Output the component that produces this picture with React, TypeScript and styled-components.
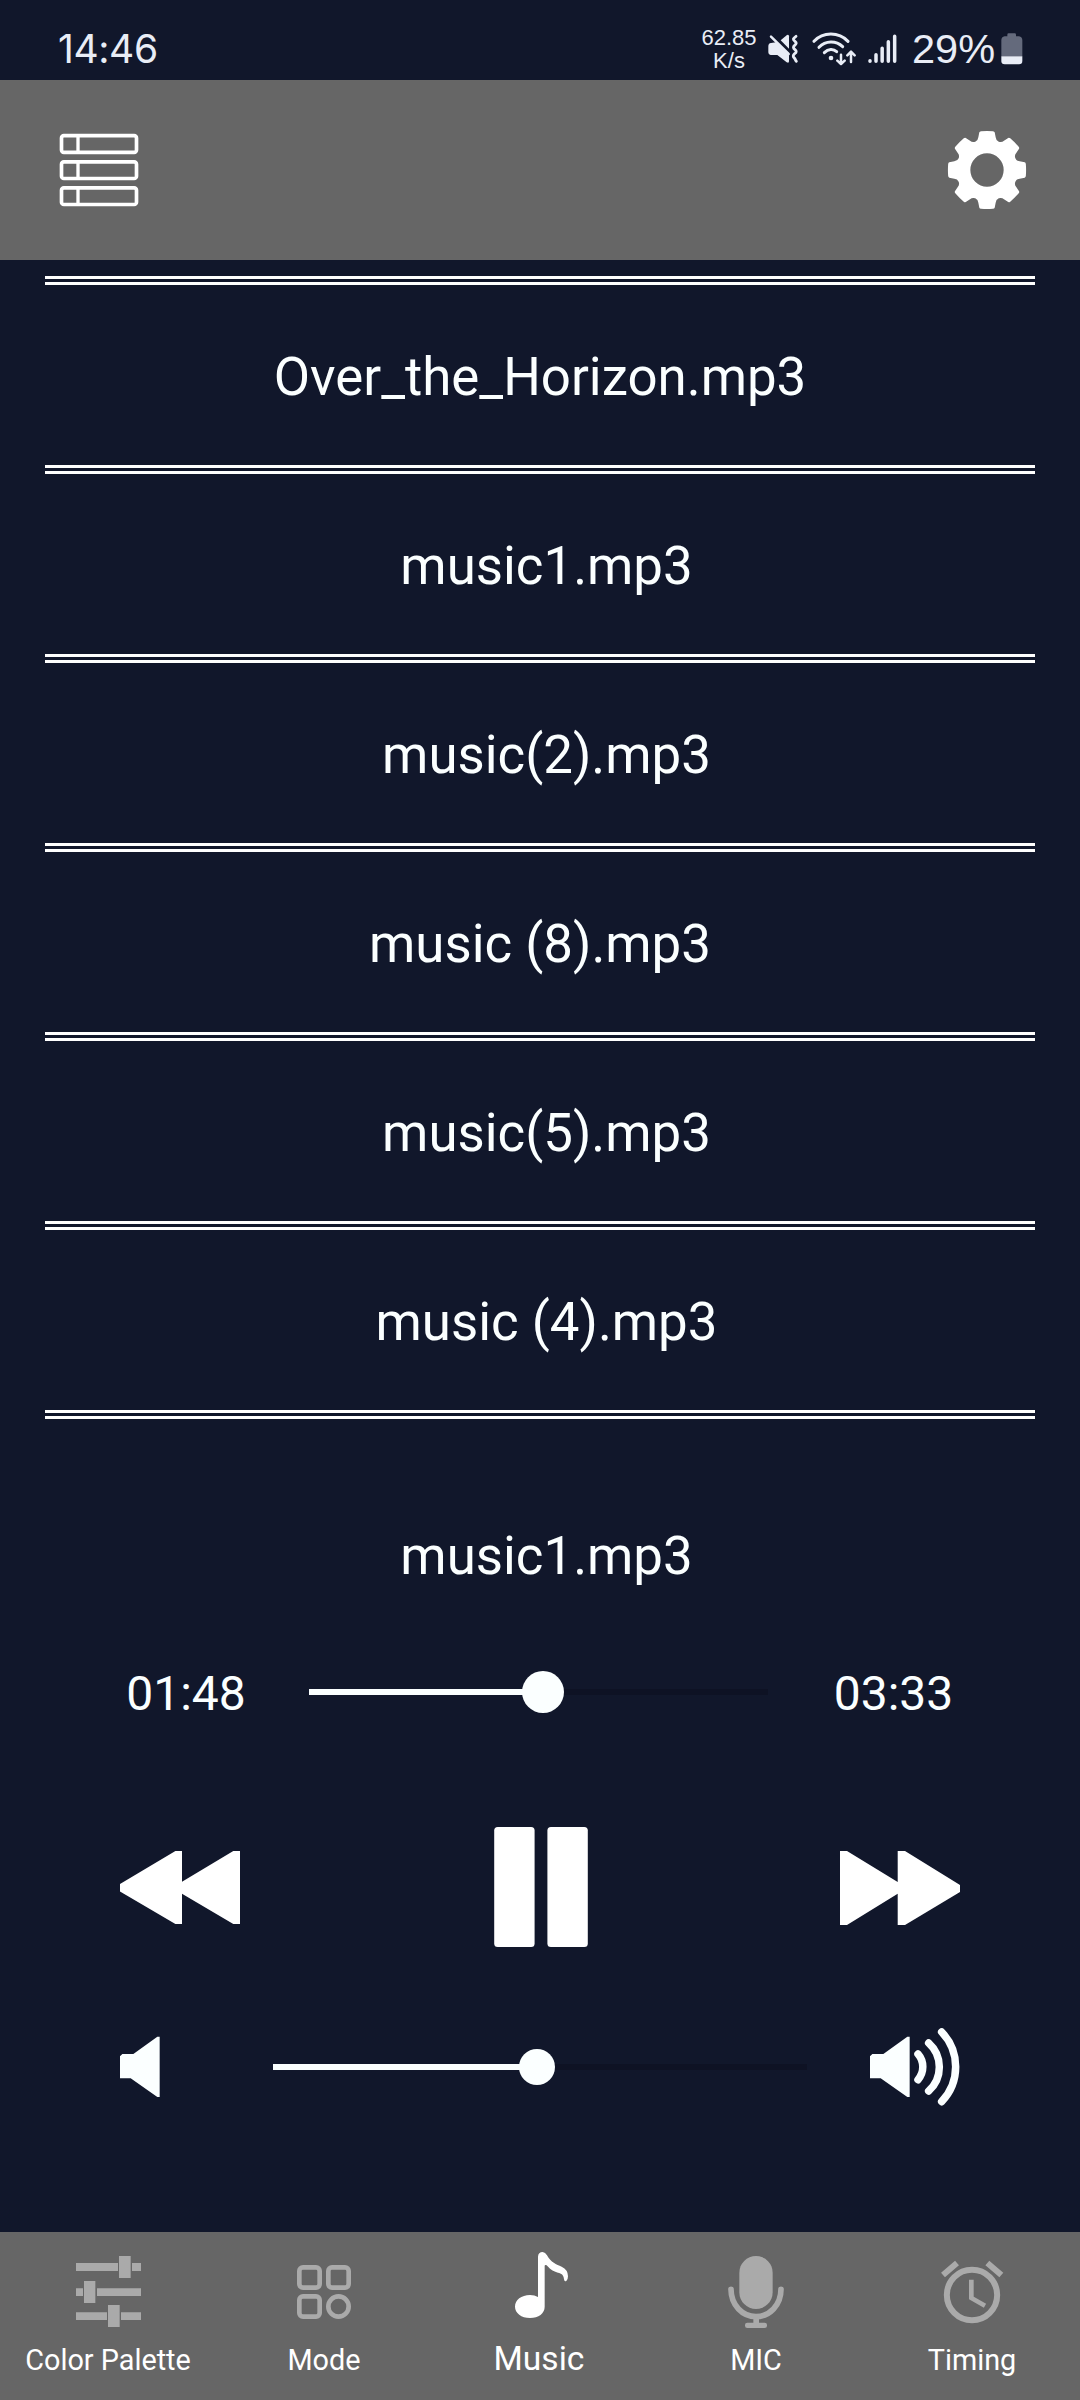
import React from "react";
import styled, { createGlobalStyle } from "styled-components";

const NIGHT = "#11172b";
const BAR = "#666666";
const MUTED = "#aaaaaa";
const STATUS = "#e9edf6";

const GlobalStyle = createGlobalStyle`
  * { box-sizing: border-box; }
  body { margin: 0; background: ${NIGHT}; }
  svg { display: block; flex: none; }
`;

const Screen = styled.div`
  width: 1080px;
  height: 2400px;
  display: flex;
  flex-direction: column;
  overflow: hidden;
  background: ${NIGHT};
  color: #fbffff;
  font-family: Roboto, sans-serif;
`;

const StatusBar = styled.div`
  height: 80px;
  flex: none;
  display: flex;
  align-items: center;
  padding: 18px 57px 0 58px;
  color: ${STATUS};
  font-family: "Liberation Sans", sans-serif;
`;

const Clock = styled.span`
  font-family: Inter, sans-serif;
  font-size: 39px;
  line-height: 60px;
  letter-spacing: -0.4px;
  margin-right: auto;
`;

const NetSpeed = styled.div`
  width: 60px;
  margin-right: 9px;
  font-size: 22px;
  line-height: 23px;
  text-align: center;
`;

const StatusIcon = styled.svg<{ $gap: number }>`
  margin-right: ${(p) => p.$gap}px;
`;

const BatteryText = styled.span`
  width: 89px;
  font-size: 41.5px;
  line-height: 60px;
  white-space: nowrap;
`;

const TopBar = styled.header`
  height: 180px;
  flex: none;
  display: flex;
  align-items: center;
  justify-content: space-between;
  padding: 0 53px 0 59px;
  background: ${BAR};
`;

const TrackList = styled.ul`
  list-style: none;
  flex: none;
  margin: 16px 45px 0;
  padding: 0;
  border-top: 9px double #ffffff;
`;

const TrackRow = styled.li<{ $shift: number }>`
  height: 189px;
  display: flex;
  align-items: center;
  justify-content: center;
  padding: 4px 0 0 ${(p) => p.$shift}px;
  border-bottom: 9px double #ffffff;
  font-size: 52.8px;
  white-space: pre;
`;

const Player = styled.section`
  flex: 1;
  padding-top: 87px;
`;

const NowPlaying = styled.div`
  height: 100px;
  line-height: 100px;
  padding-left: 13px;
  font-size: 52.8px;
  text-align: center;
`;

const ProgressRow = styled.div`
  height: 100px;
  margin-top: 36px;
  padding-left: 63px;
  display: grid;
  grid-template-columns: 246px 459px 251px;
  align-items: center;
`;

const Time = styled.span`
  padding-top: 3px;
  font-size: 48px;
  text-align: center;
`;

const Controls = styled.div`
  height: 120px;
  margin-top: 85px;
  padding: 0 120px;
  display: flex;
  align-items: center;
  justify-content: space-between;
`;

const VolumeRow = styled.div`
  height: 80px;
  margin-top: 80px;
  padding: 0 120px;
  display: grid;
  grid-template-columns: 153px 534px 63px 90px;
  align-items: center;
`;

const Track = styled.div`
  position: relative;
  height: 6px;
  background: #0e1224;
`;

const Fill = styled.div`
  height: 6px;
  background: #fbffff;
`;

const Thumb = styled.div<{ $size: number }>`
  position: absolute;
  top: 50%;
  width: ${(p) => p.$size}px;
  height: ${(p) => p.$size}px;
  border-radius: 50%;
  background: #fbffff;
  transform: translate(-50%, -50%);
`;

const NavBar = styled.nav`
  height: 168px;
  flex: none;
  display: grid;
  grid-template-columns: repeat(5, 216px);
  background: ${BAR};
`;

const Tab = styled.div<{ $active?: boolean }>`
  display: flex;
  flex-direction: column;
  align-items: center;
  padding-top: 18px;
  color: ${(p) => (p.$active ? "#ffffff" : MUTED)};
`;

const TabLabel = styled.span<{ $active?: boolean }>`
  color: #ffffff;
  font-size: ${(p) => (p.$active ? 33.6 : 28.8)}px;
  line-height: ${(p) => (p.$active ? 57 : 60)}px;
  padding-right: ${(p) => (p.$active ? 2 : 0)}px;
  white-space: nowrap;
`;

function Slider({ value, thumb }: { value: number; thumb: number }) {
  const pct = `${value * 100}%`;
  return (
    <Track>
      <Fill style={{ width: pct }} />
      <Thumb $size={thumb} style={{ left: pct }} />
    </Track>
  );
}

function MutedIcon() {
  return (
    <StatusIcon $gap={13} width="31" height="30" viewBox="266 102 93 90" fill={STATUS}>
      <path d="M304 121L323 105Q329 102 329 109V146Z" />
      <path d="M267 139Q267 130 275 129L290 127L329 166V184Q329 191 322 187L294 165H275Q267 164 267 156Z" />
      <path d="M275 110L328 162" stroke={STATUS} strokeWidth="7.5" strokeLinecap="round" />
      <path
        d="M350 109C340 116 340 119 347 124C352 128 352 131 346 136C341 140 341 144 347 149C352 153 352 157 346 161C340 166 341 171 345 174C348 177 348 181 351 184"
        fill="none"
        stroke={STATUS}
        strokeWidth="8.5"
        strokeLinecap="round"
        strokeLinejoin="round"
      />
    </StatusIcon>
  );
}

function WifiIcon() {
  return (
    <StatusIcon
      $gap={12}
      width="44"
      height="34"
      viewBox="397 94 132 102"
      fill="none"
      stroke={STATUS}
      strokeWidth="9"
      strokeLinecap="round"
      strokeLinejoin="round"
    >
      <path d="M403 122C430 93 477 93 505 122" />
      <path d="M418 140C438 119 469 119 489 138" />
      <path d="M434 156C446 144 461 144 471 153" />
      <circle cx="454" cy="172" r="7" fill={STATUS} stroke="none" />
      <path d="M484 162V189M473 180L484 190L495 180M514 184V155M503 164L514 153L525 164" strokeWidth="7.5" />
    </StatusIcon>
  );
}

function SignalIcon() {
  return (
    <StatusIcon
      $gap={15}
      width="29"
      height="30"
      viewBox="566 108 87 90"
      stroke={STATUS}
      strokeWidth="10.5"
      strokeLinecap="round"
    >
      <path d="M572 188V190M590 170V190M608.5 151V190M627 131V190M646 115V190" />
    </StatusIcon>
  );
}

function BatteryIcon() {
  return (
    <svg width="22" height="32" viewBox="962 98 66 96">
      <path
        d="M981 103Q981 99 985 99H1003Q1007 99 1007 103V108H1016Q1026 110 1026 120V168H963V120Q963 110 973 108H981Z"
        fill="#646a7c"
      />
      <path d="M963 168H1026V182Q1026 192 1016 192H973Q963 192 963 182Z" fill={STATUS} />
    </svg>
  );
}

function ListIcon() {
  return (
    <svg width="80" height="74" viewBox="177 399 240 222" fill="none" stroke="#ffffff" strokeWidth="11">
      {[407, 485.5, 563.5].map((y) => (
        <g key={y}>
          <rect x="184.5" y={y} width="225" height="50" rx="7" />
          <path d={`M234 ${y}V${y + 50}`} strokeWidth="10" />
        </g>
      ))}
    </svg>
  );
}

/* Eight teeth with round notches between them, around an open hub. */
function gearPath(): string {
  const at = (x: number, y: number, deg: number) => {
    const a = (deg * Math.PI) / 180;
    const px = x * Math.cos(a) - y * Math.sin(a);
    const py = x * Math.sin(a) + y * Math.cos(a);
    return `${px.toFixed(1)} ${py.toFixed(1)}`;
  };
  let d = "";
  for (let i = 0; i < 8; i++) {
    const t = i * 45;
    d += `${i === 0 ? "M" : "L"}${at(-26, -98, t)}`;
    d += `L${at(-23, -113, t)}Q${at(-22, -116, t)} ${at(-18, -116.5, t)}`;
    d += `Q${at(0, -118, t)} ${at(18, -116.5, t)}Q${at(22, -116, t)} ${at(23, -113, t)}`;
    d += `L${at(26, -98, t)}A15 15 0 0 0 ${at(-26, -98, t + 45)}`;
  }
  return `${d}ZM50 0A50 50 0 1 0 -50 0A50 50 0 1 0 50 0Z`;
}

function GearIcon() {
  return (
    <svg width="80" height="80" viewBox="-120 -120 240 240" fill="#ffffff" fillRule="evenodd">
      <path d={gearPath()} />
    </svg>
  );
}

function RewindIcon() {
  return (
    <svg width="120" height="73" viewBox="0 0 120 73" fill="#ffffff">
      <path d="M0 33L55.4 0H62V30.7L113.3 0H120V73H113.3L62 42.7V73H55.4L0 40.5Z" />
    </svg>
  );
}

function PauseIcon() {
  return (
    <svg width="96" height="120" viewBox="0 0 96 120" fill="#ffffff">
      <rect x="2.2" width="40.4" height="120" rx="3.5" />
      <rect x="55.4" width="40.4" height="120" rx="3.5" />
    </svg>
  );
}

function ForwardIcon() {
  return (
    <svg width="120" height="72" viewBox="0 0 120 72" fill="#ffffff" overflow="visible">
      <path d="M0 0H7L57.7 31V0H65L120 34V41L65 74H57.7V42.7L7 74H0Z" />
    </svg>
  );
}

function SpeakerIcon({ loud }: { loud?: boolean }) {
  return (
    <svg width={loud ? 90 : 40} height="80" viewBox={`810 681 ${loud ? 270 : 120} 240`} fill="#fbffff">
      <path d="M810 769L817 762H850L922 710H929V891H922L842 835H810Z" />
      {loud && (
        <g fill="none" stroke="#fbffff" strokeWidth="22.5" strokeLinecap="round">
          <path d="M954 762A58.6 58.6 0 0 1 954 839" />
          <path d="M986 729A97 97 0 0 1 986 873" />
          <path d="M1025 696A151 151 0 0 1 1025 905" />
        </g>
      )}
    </svg>
  );
}

function SlidersIcon() {
  return (
    <svg width="80" height="80" viewBox="204 120 240 240" fill="currentColor">
      <path d="M228 159H354V183H228ZM396 159H423V183H396ZM357 138H392V204H357Z" />
      <path d="M228 235H249V258H228ZM291 235H423V258H291ZM252 213H286V279H252Z" />
      <path d="M228 307H321V330H228ZM363 307H423V330H363ZM324 285H359V351H324Z" />
    </svg>
  );
}

function ModeIcon() {
  return (
    <svg width="80" height="80" viewBox="852 120 240 240" fill="none" stroke="currentColor" strokeWidth="14">
      <rect x="898" y="172" width="61" height="61" rx="11" />
      <rect x="985" y="172" width="61" height="61" rx="11" />
      <rect x="898" y="259" width="61" height="61" rx="11" />
      <circle cx="1015.5" cy="289.5" r="30.5" />
    </svg>
  );
}

function NoteIcon() {
  return (
    <svg width="80" height="80" viewBox="300 120 240 240" fill="currentColor">
      <path d="M414 261V140Q415 126 428 126Q436 127 441 136C453 157 469 164 485 170Q504 179 504 199Q504 208 499 213Q493 216 492 208C491 194 484 190 474 188C457 184 447 174 440 166Q434 163 434 168V290C434 310 416 324 390 324C364 324 345 309 345 290C345 270 364 255 390 255Q404 255 414 261Z" />
    </svg>
  );
}

function MicIcon() {
  return (
    <svg width="80" height="80" viewBox="48 120 240 240" fill="currentColor">
      <rect x="118" y="138" width="100" height="159" rx="50" />
      <path
        d="M93 238C93 286 128 320 168 320C208 320 243 286 243 238"
        fill="none"
        stroke="currentColor"
        strokeWidth="17"
        strokeLinecap="round"
      />
      <path d="M160 322H177V342H160Z" />
      <rect x="135" y="338" width="66" height="16" rx="7" />
    </svg>
  );
}

function AlarmIcon() {
  return (
    <svg width="80" height="80" viewBox="696 120 240 240" fill="none" stroke="currentColor">
      <circle cx="816" cy="255" r="75.5" strokeWidth="18" />
      <path d="M814 209V264L855 287" strokeWidth="14" />
      <path d="M729 195L771 159M862 159L904 195" strokeWidth="18" />
    </svg>
  );
}

const SPACE = 13;

const tracks = [
  { name: "Over_the_Horizon.mp3", shift: 0 },
  { name: "music1.mp3", shift: SPACE },
  { name: "music(2).mp3", shift: SPACE },
  { name: "music (8).mp3", shift: 0 },
  { name: "music(5).mp3", shift: SPACE },
  { name: "music (4).mp3", shift: SPACE },
];

const tabs = [
  { label: "Color Palette", Icon: SlidersIcon },
  { label: "Mode", Icon: ModeIcon },
  { label: "Music", Icon: NoteIcon, active: true },
  { label: "MIC", Icon: MicIcon },
  { label: "Timing", Icon: AlarmIcon },
];

export default function App() {
  return (
    <Screen>
      <GlobalStyle />
      <StatusBar>
        <Clock>14:46</Clock>
        <NetSpeed>
          <div>62.85</div>
          <div>K/s</div>
        </NetSpeed>
        <MutedIcon />
        <WifiIcon />
        <SignalIcon />
        <BatteryText>29%</BatteryText>
        <BatteryIcon />
      </StatusBar>
      <TopBar>
        <ListIcon />
        <GearIcon />
      </TopBar>
      <TrackList>
        {tracks.map((t) => (
          <TrackRow key={t.name} $shift={t.shift}>
            {t.name}
          </TrackRow>
        ))}
      </TrackList>
      <Player>
        <NowPlaying>music1.mp3</NowPlaying>
        <ProgressRow>
          <Time>01:48</Time>
          <Slider value={0.51} thumb={42} />
          <Time>03:33</Time>
        </ProgressRow>
        <Controls>
          <RewindIcon />
          <PauseIcon />
          <ForwardIcon />
        </Controls>
        <VolumeRow>
          <SpeakerIcon />
          <Slider value={0.494} thumb={36} />
          <span />
          <SpeakerIcon loud />
        </VolumeRow>
      </Player>
      <NavBar>
        {tabs.map(({ label, Icon, active }) => (
          <Tab key={label} $active={active}>
            <Icon />
            <TabLabel $active={active}>{label}</TabLabel>
          </Tab>
        ))}
      </NavBar>
    </Screen>
  );
}
